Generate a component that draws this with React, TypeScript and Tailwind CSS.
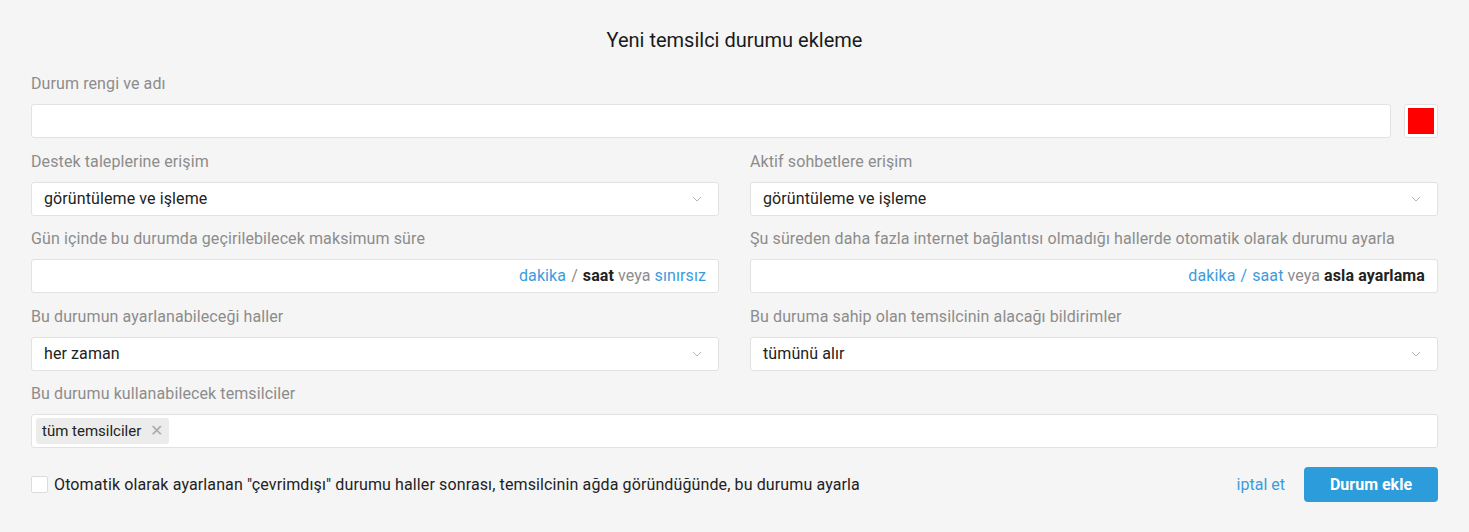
import React from "react";

const font = { fontFamily: "Roboto, 'Noto Sans', sans-serif" };

const Label = ({ children }: { children: React.ReactNode }) => (
    <div className="text-[16px] leading-5 tracking-[0.1px] text-[#8c8c8c] mb-[10px]">{children}</div>
);

const Chevron = () => (
    <svg width="10" height="6" viewBox="0 0 10 6" className="text-[#b5b5b5]">
        <path d="M1 1l4 4 4-4" fill="none" stroke="currentColor" strokeWidth="1" />
    </svg>
);

const Select = ({ value }: { value: string }) => (
    <div className="h-[34px] bg-white border border-[#e2e2e2] rounded-[3px] flex items-center justify-between pl-3 pr-4 text-[16px] tracking-[0.1px] text-[#222]">
        <span>{value}</span>
        <Chevron />
    </div>
);

const Field = ({ label, children }: { label: string; children: React.ReactNode }) => (
    <div className="flex flex-col mb-[13.5px]">
        <Label>{label}</Label>
        {children}
    </div>
);

const DurationInput = ({ children }: { children: React.ReactNode }) => (
    <div className="h-[34px] bg-white border border-[#e2e2e2] rounded-[3px] flex items-center justify-end pr-3 text-[16px] tracking-[0.1px] text-[#8c8c8c]">
        {children}
    </div>
);

export default function App() {
    return (
        <div className="min-h-[532px] bg-[#f5f5f5] px-[31px] pt-[26px]" style={font}>
            <h1 className="text-center text-[20px] leading-7 text-[#1a1a1a] mb-[20px]">Yeni temsilci durumu ekleme</h1>

            <Field label="Durum rengi ve adı">
                <div className="flex items-center gap-[13px]">
                    <div className="flex-1 h-[34px] bg-white border border-[#e2e2e2] rounded-[3px]" />
                    <div className="w-[34px] h-[34px] bg-white border border-[#e2e2e2] rounded-[3px] flex items-center justify-center">
                        <div className="w-[26px] h-[26px] bg-[#ff0000]" />
                    </div>
                </div>
            </Field>

            <div className="grid grid-cols-2 gap-x-[31px]">
                <Field label="Destek taleplerine erişim">
                    <Select value="görüntüleme ve işleme" />
                </Field>
                <Field label="Aktif sohbetlere erişim">
                    <Select value="görüntüleme ve işleme" />
                </Field>
                <Field label="Gün içinde bu durumda geçirilebilecek maksimum süre">
                    <DurationInput>
                        <span className="text-[#3d9bdc]">dakika</span>
                        <span className="mx-[5px]">/</span>
                        <span className="font-bold text-[#222]">saat</span>
                        <span className="mx-[4px]">veya</span>
                        <span className="text-[#3d9bdc]">sınırsız</span>
                    </DurationInput>
                </Field>
                <Field label="Şu süreden daha fazla internet bağlantısı olmadığı hallerde otomatik olarak durumu ayarla">
                    <DurationInput>
                        <span className="text-[#3d9bdc]">dakika</span>
                        <span className="mx-[5px] text-[#3d9bdc]">/</span>
                        <span className="text-[#3d9bdc]">saat</span>
                        <span className="mx-[4px]">veya</span>
                        <span className="font-bold text-[#222]">asla ayarlama</span>
                    </DurationInput>
                </Field>
                <Field label="Bu durumun ayarlanabileceği haller">
                    <Select value="her zaman" />
                </Field>
                <Field label="Bu duruma sahip olan temsilcinin alacağı bildirimler">
                    <Select value="tümünü alır" />
                </Field>
            </div>

            <Field label="Bu durumu kullanabilecek temsilciler">
                <div className="h-[34px] bg-white border border-[#e2e2e2] rounded-[3px] flex items-center px-1">
                    <span className="h-[26px] bg-[#ececec] rounded-[3px] flex items-center pl-[6px] pr-[6px] text-[15px] text-[#222]">
                        tüm temsilciler
                        <span className="ml-[9px] text-[#aaa] text-[16px] leading-none">✕</span>
                    </span>
                </div>
            </Field>

            <div className="flex items-center justify-between mt-[19px]">
                <label className="flex items-center gap-[6px] text-[16px] tracking-[0.12px] text-[#222]">
                    <span className="w-[17px] h-[17px] bg-white border border-[#dcdcdc] rounded-[2px]" />
                    Otomatik olarak ayarlanan "çevrimdışı" durumu haller sonrası, temsilcinin ağda göründüğünde, bu durumu ayarla
                </label>
                <div className="flex items-center gap-[19px]">
                    <button className="text-[16px] text-[#3d9bdc]">iptal et</button>
                    <button className="w-[134px] h-[35px] rounded-[4px] bg-[#2d9cdb] text-white font-bold text-[16px]">Durum ekle</button>
                </div>
            </div>
        </div>
    );
}
